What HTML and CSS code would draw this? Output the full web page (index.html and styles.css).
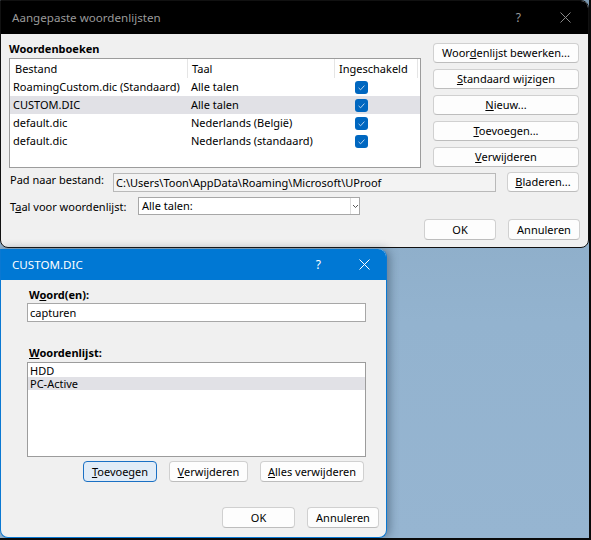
FILE: index.html
```html
<!DOCTYPE html>
<html lang="nl">
<head>
    <meta charset="UTF-8">
    <title>Aangepaste woordenlijsten</title>
    <link rel="stylesheet" href="styles.css">
</head>
<body>
<div class="screen">
    <!-- hoofdvenster -->
    <div class="dlg dlgMain">
        <div class="titlebar dark">
            <span class="title">Aangepaste woordenlijsten</span>
            <span class="help">?</span>
            <svg class="close" width="11" height="11" viewBox="0 0 11 11"><path d="M0.5 0.5 L10.5 10.5 M10.5 0.5 L0.5 10.5" stroke="#8a8a8a" stroke-width="1" fill="none"/></svg>
        </div>
        <div class="mainBody">
            <div class="top">
                <div class="leftCol">
                    <div class="groupLabel">Woordenboeken</div>
                    <div class="listview">
                        <div class="lvHead">
                            <div class="hc hc1">Bestand</div>
                            <div class="hc hc2">Taal</div>
                            <div class="hc hc3">Ingeschakeld</div>
                            <div class="hc hc4"></div>
                        </div>
                        <div class="lvRow">
                            <div class="rc1">RoamingCustom.dic (Standaard)</div>
                            <div class="rc2">Alle talen</div>
                            <div class="rc3"><span class="check"></span></div>
                        </div>
                        <div class="lvRow selected">
                            <div class="rc1">CUSTOM.DIC</div>
                            <div class="rc2">Alle talen</div>
                            <div class="rc3"><span class="check"></span></div>
                        </div>
                        <div class="lvRow">
                            <div class="rc1">default.dic</div>
                            <div class="rc2">Nederlands (België)</div>
                            <div class="rc3"><span class="check"></span></div>
                        </div>
                        <div class="lvRow">
                            <div class="rc1">default.dic</div>
                            <div class="rc2">Nederlands (standaard)</div>
                            <div class="rc3"><span class="check"></span></div>
                        </div>
                    </div>
                </div>
                <div class="rightCol">
                    <div class="btn sideBtn">Woor<u>d</u>enlijst bewerken...</div>
                    <div class="btn sideBtn"><u>S</u>tandaard wijzigen</div>
                    <div class="btn sideBtn"><u>N</u>ieuw...</div>
                    <div class="btn sideBtn"><u>T</u>oevoegen...</div>
                    <div class="btn sideBtn"><u>V</u>erwijderen</div>
                </div>
            </div>
            <div class="pathRow">
                <div class="pathLabel">Pad naar bestand:</div>
                <div class="pathField">C:\Users\Toon\AppData\Roaming\Microsoft\UProof</div>
                <div class="btn browseBtn"><u>B</u>laderen...</div>
            </div>
            <div class="langRow">
                <div class="langLabel">T<u>a</u>al voor woordenlijst:</div>
                <div class="select">
                    <span class="selText">Alle talen:</span>
                    <span class="selArrow"><svg width="5" height="3" viewBox="0 0 5 3"><path d="M0 0 L2.5 2.5 L5 0" stroke="#444" stroke-width="0.9" fill="none"/></svg></span>
                </div>
            </div>
            <div class="okRow">
                <div class="btn okBtn">OK</div>
                <div class="btn okBtn">Annuleren</div>
            </div>
        </div>
    </div>

    <!-- CUSTOM.DIC venster -->
    <div class="dlg dlgWord">
        <div class="titlebar blue">
            <span class="title">CUSTOM.DIC</span>
            <span class="help">?</span>
            <svg class="close" width="11" height="11" viewBox="0 0 11 11"><path d="M0.5 0.5 L10.5 10.5 M10.5 0.5 L0.5 10.5" stroke="#ffffff" stroke-width="1" fill="none"/></svg>
        </div>
        <div class="wordBody">
            <div class="fieldLabel">W<u>o</u>ord(en):</div>
            <div class="textInput">capturen</div>
            <div class="fieldLabel listLabel"><u>W</u>oordenlijst:</div>
            <div class="wordList">
                <div class="wlItem">HDD</div>
                <div class="wlItem selected">PC-Active</div>
            </div>
            <div class="wordBtns">
                <div class="btn focus addBtn"><u>T</u>oevoegen</div>
                <div class="btn delBtn"><u>V</u>erwijderen</div>
                <div class="btn delAllBtn"><u>A</u>lles verwijderen</div>
            </div>
            <div class="wordOk">
                <div class="btn okBtn2">OK</div>
                <div class="btn cancelBtn2">Annuleren</div>
            </div>
        </div>
    </div>
</div>
</body>
</html>
```

FILE: styles.css
```css
body {
    margin: 0;
    font-family: "Noto Sans", sans-serif;
    font-size: 11px;
    color: #000;
}
.screen {
    width: 591px;
    height: 540px;
    box-sizing: border-box;
    border-right: 2px solid #0a0a0a;
    border-bottom: 2px solid #0a0a0a;
    overflow: hidden;
    background: linear-gradient(180deg, #7c99b1 0%, #8aaac5 25%, #93b3cf 60%, #96b5d1 100%);
}
.dlg {
    box-sizing: border-box;
    background-color: #f0f0f0;
    display: flex;
    flex-direction: column;
}
.dlgMain {
    width: 589px;
    height: 248px;
    border: 1px solid #111;
    border-radius: 0 8px 8px 8px;
    overflow: hidden;
}
.titlebar {
    display: flex;
    align-items: center;
    flex-shrink: 0;
}
.titlebar .title {
    flex: 1;
    font-size: 11.6px;
}
.titlebar .help {
    font-size: 12px;
}
.dark {
    height: 33px;
    background-color: #000;
    color: #9a9a9a;
    padding-left: 11px;
}
.dark .help {
    margin-right: 39px;
}
.dark .close {
    margin-right: 17px;
}
.mainBody {
    flex: 1;
    padding: 5px 8px 0 8px;
}
.top {
    display: flex;
    gap: 12px;
}
.leftCol {
    width: 412px;
}
.groupLabel {
    font-weight: bold;
    line-height: 19px;
}
.listview {
    height: 110px;
    box-sizing: border-box;
    border: 1px solid #9c9c9c;
    background-color: #fff;
}
.lvHead, .lvRow {
    display: grid;
    grid-template-columns: 178px 147px 83px 1fr;
}
.lvHead {
    height: 19px;
    line-height: 19px;
}
.hc {
    border-right: 1px solid #e5e5e5;
    padding-left: 4px;
    white-space: nowrap;
}
.hc1 {
    padding-left: 5px;
}
.hc4 {
    border-right: none;
}
.lvRow {
    height: 18px;
    line-height: 18px;
    white-space: nowrap;
}
.lvRow div {
    padding-left: 3px;
}
.lvRow .rc3 {
    padding-left: 20px;
    display: flex;
    align-items: center;
}
.selected {
    background-color: #e1e1e6;
}
.check {
    display: inline-block;
    width: 13px;
    height: 13px;
    border-radius: 3px;
    background-color: #0067c0;
    background-image: url("data:image/svg+xml;utf8,<svg xmlns='http://www.w3.org/2000/svg' width='13' height='13'><path d='M3.6 6.9 L5.6 8.8 L9.4 4.6' stroke='%23b9d5ef' stroke-width='1' fill='none'/></svg>");
}
.rightCol {
    width: 146px;
    padding-top: 4px;
}
.btn {
    box-sizing: border-box;
    background-color: #fdfdfd;
    border: 1px solid #d0d0d0;
    border-bottom-color: #bdbdbd;
    border-radius: 4px;
    text-align: center;
    white-space: nowrap;
}
.sideBtn {
    height: 20px;
    line-height: 18px;
    margin-bottom: 6px;
}
.sideBtn:last-child {
    margin-bottom: 0;
}
.pathRow {
    display: flex;
    align-items: center;
    margin-top: 4px;
    height: 20px;
}
.pathLabel {
    width: 104px;
    padding-left: 1px;
    box-sizing: border-box;
    margin-top: -6px;
}
.pathField {
    width: 383px;
    height: 19px;
    line-height: 17px;
    box-sizing: border-box;
    border: 1px solid #b9b9b9;
    background-color: #f3f3f3;
    padding-left: 2px;
    white-space: nowrap;
}
.browseBtn {
    width: 72px;
    height: 20px;
    line-height: 18px;
    margin-left: 11px;
}
.langRow {
    display: flex;
    align-items: center;
    margin-top: 5px;
    height: 18px;
}
.langLabel {
    width: 129px;
    padding-left: 1px;
    box-sizing: border-box;
}
.select {
    width: 222px;
    height: 18px;
    box-sizing: border-box;
    border: 1px solid #a7a7a7;
    background-color: #fff;
    display: flex;
}
.selText {
    flex: 1;
    line-height: 16px;
    padding-left: 3px;
}
.selArrow {
    width: 8px;
    border-left: 1px solid #dcdcdc;
    display: flex;
    align-items: center;
    justify-content: center;
}
.okRow {
    display: flex;
    justify-content: flex-end;
    gap: 12px;
    margin-top: 4px;
}
.okBtn {
    width: 72px;
    height: 21px;
    line-height: 19px;
}

/* tweede venster */
.dlgWord {
    width: 387px;
    height: 289px;
    margin-top: 1px;
    border: 1px solid #0a78d2;
    border-top: none;
    border-radius: 0 8px 8px 8px;
    box-shadow: 3px 0 10px rgba(40, 60, 80, 0.45);
}
.blue {
    height: 31px;
    background-color: #0078d4;
    color: #fff;
    padding-left: 11px;
    border-radius: 0 8px 0 0;
}
.blue .help {
    margin-right: 38px;
}
.blue .close {
    margin-right: 16px;
}
.wordBody {
    flex: 1;
    padding: 7px 20px 0 26px;
}
.fieldLabel {
    font-weight: bold;
    line-height: 16px;
    padding-left: 2px;
}
.listLabel {
    margin-top: 23px;
}
.textInput {
    height: 19px;
    line-height: 17px;
    box-sizing: border-box;
    border: 1px solid #a7a7a7;
    background-color: #fff;
    padding-left: 2px;
}
.wordList {
    margin-top: 1px;
    height: 95px;
    box-sizing: border-box;
    border: 1px solid #9c9c9c;
    background-color: #fff;
    padding-top: 1px;
}
.wlItem {
    line-height: 13px;
    height: 13px;
    padding-left: 2px;
}
.wordBtns {
    display: flex;
    gap: 12px;
    margin-top: 4px;
    margin-left: 56px;
}
.wordBtns .btn {
    height: 21px;
    line-height: 19px;
}
.addBtn {
    width: 74px;
}
.focus {
    border: 1px solid #1a70c4;
    background-color: #e1ecf7;
}
.delBtn {
    width: 79px;
}
.delAllBtn {
    width: 104px;
}
.wordOk {
    display: flex;
    justify-content: flex-end;
    gap: 12px;
    margin-top: 25px;
    margin-right: -13px;
}
.wordOk .btn {
    height: 21px;
    line-height: 19px;
}
.okBtn2 {
    width: 73px;
}
.cancelBtn2 {
    width: 72px;
}
```
